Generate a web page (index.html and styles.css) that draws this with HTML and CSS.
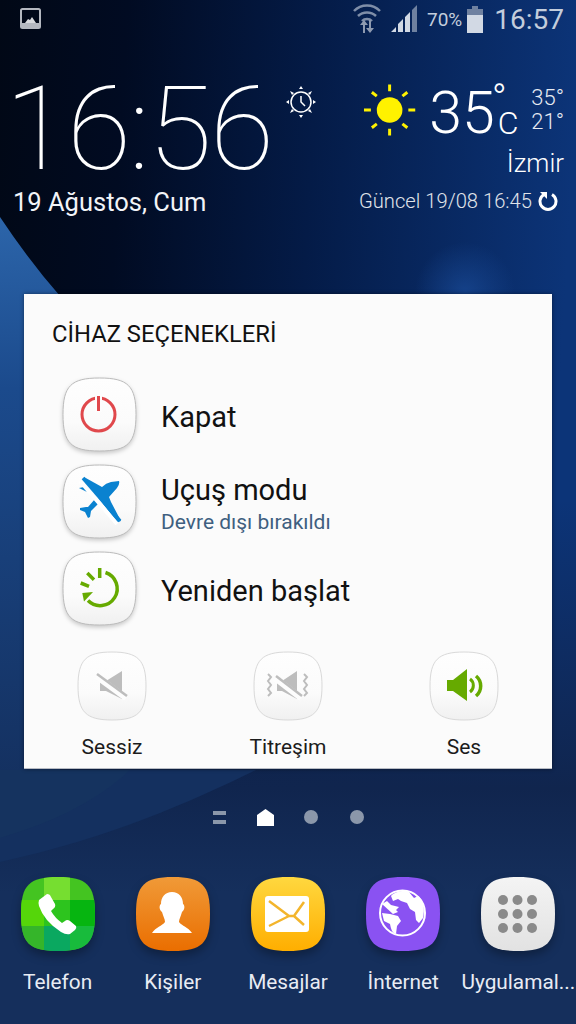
FILE: index.html
```html
<!DOCTYPE html>
<html lang="en">
<head>
    <meta charset="UTF-8">
    <meta name="viewport" content="width=device-width, initial-scale=1.0">
    <title>Home</title>
    <link rel="stylesheet" href="styles.css">
</head>
<body>
<svg class="defs-only" width="0" height="0">
    <defs>
        <linearGradient id="btnFill" x1="0" y1="0" x2="0" y2="1">
            <stop offset="0" stop-color="#fefefe"/>
            <stop offset="0.6" stop-color="#fbfbfb"/>
            <stop offset="1" stop-color="#f0f0f0"/>
        </linearGradient>
        <linearGradient id="orangeFill" x1="0" y1="0" x2="0" y2="1">
            <stop offset="0" stop-color="#f09a38"/>
            <stop offset="1" stop-color="#ea6e00"/>
        </linearGradient>
        <linearGradient id="yellowFill" x1="0" y1="0" x2="0" y2="1">
            <stop offset="0" stop-color="#ffd83f"/>
            <stop offset="1" stop-color="#ffae00"/>
        </linearGradient>
        <linearGradient id="grayFill" x1="0" y1="0" x2="0" y2="1">
            <stop offset="0" stop-color="#f4f4f4"/>
            <stop offset="1" stop-color="#e2e2e2"/>
        </linearGradient>
        <path id="appShape" d="M38 1C67 1 75 9 75 38S67 75 38 75 1 67 1 38 9 1 38 1Z"/>
        <path id="btnShape" d="M37.500 1C66 1 74 9 74 37.500S66 74 37.500 74 1 66 1 37.500 9 1 37.500 1Z" fill="url(#btnFill)" stroke="#bbbbbb" stroke-width="1"/>
        <path id="btnShapeFlat" d="M35 1C61 1 69 9 69 35S61 69 35 69 1 61 1 35 9 1 35 1Z" fill="url(#btnFill)" stroke="#d9d9d9" stroke-width="1"/>
        <clipPath id="appClip"><use href="#appShape"/></clipPath>
    </defs>
</svg>

<svg class="wallpaper" viewBox="0 0 576 1024" preserveAspectRatio="none">
    <defs>
        <linearGradient id="wallBase" x1="0" y1="0" x2="1" y2="0.1">
            <stop offset="0" stop-color="#010816"/>
            <stop offset="0.22" stop-color="#010b22"/>
            <stop offset="0.55" stop-color="#041b47"/>
            <stop offset="1" stop-color="#0c3478"/>
        </linearGradient>
        <linearGradient id="wallEdge" x1="0" y1="217" x2="0" y2="790" gradientUnits="userSpaceOnUse">
            <stop offset="0" stop-color="#2c65aa"/>
            <stop offset="0.3" stop-color="#1b4a8c"/>
            <stop offset="1" stop-color="#14305f"/>
        </linearGradient>
        <linearGradient id="wallLow" x1="0" y1="500" x2="0" y2="1024" gradientUnits="userSpaceOnUse">
            <stop offset="0" stop-color="#10254e" stop-opacity="0"/>
            <stop offset="0.55" stop-color="#10254e"/>
            <stop offset="0.75" stop-color="#152f5c"/>
            <stop offset="1" stop-color="#152f5c"/>
        </linearGradient>
        <radialGradient id="wallGlow" cx="465" cy="292" r="50" gradientUnits="userSpaceOnUse">
            <stop offset="0" stop-color="#1a4b98" stop-opacity="0.7"/>
            <stop offset="1" stop-color="#1a4b98" stop-opacity="0"/>
        </radialGradient>
    </defs>
    <rect width="576" height="1024" fill="url(#wallBase)"/>
    <rect width="576" height="1024" fill="url(#wallGlow)"/>
    <rect y="500" width="576" height="524" fill="url(#wallLow)"/>
    <path d="M0 217Q30 262 60 296V770H0Z" fill="url(#wallEdge)"/>
    <path d="M0 862C110 838 190 802 256 770H0Z" fill="#14305f"/>
    <path d="M0 838C60 820 100 798 130 770H0Z" fill="#15335f"/>
</svg>

<div class="screen">
    <div class="status-bar">
        <svg class="status-pic" width="22" height="22" viewBox="0 0 22 22">
            <rect x="1" y="1" width="19" height="19" rx="1.500" fill="none" stroke="#b4b8c0" stroke-width="2"/>
            <rect x="1" y="15" width="19" height="5" fill="#b4b8c0"/>
            <path d="M5 15l3-4 2 1 2-3 4 6z" fill="#d8dade"/>
        </svg>
        <div class="status-right">
            <svg width="30" height="34" viewBox="0 0 30 34">
                <path d="M2 9a18 18 0 0 1 26 0M6 14a13 13 0 0 1 18 0M10 19a7 7 0 0 1 10 0" fill="none" stroke="#7f8ea8" stroke-width="2.500"/>
                <path d="M11 32v-8h-3l4-5 4 5h-3v8zM17 19h2v8h3l-4 5-4-5h3z" fill="#8e9ab0" transform="translate(0 -1)"/>
            </svg>
            <svg class="status-signal" width="28" height="28" viewBox="0 0 28 28">
                <path d="M1 27l5-5v5zM8 27v-8l5-5v13zM15 27V12l5-5v20z" fill="#d2d9e4"/>
                <path d="M22 27V5l5-5v27z" fill="#6f81a0"/>
            </svg>
            <span class="status-pct">70%</span>
            <svg width="16" height="27" viewBox="0 0 16 27">
                <path d="M5 0h6v3h5v24H0V3h5z" fill="#6f81a0"/>
                <rect y="9" width="16" height="18" fill="#d2d9e4"/>
            </svg>
            <span class="status-time">16:57</span>
        </div>
    </div>

    <div class="widget">
        <div class="clock-block">
            <div class="clock">16:56</div>
            <div class="date">19 Ağustos, Cum</div>
        </div>
        <svg class="alarm" width="32" height="34" viewBox="0 0 32 34">
            <circle cx="16" cy="17" r="10" fill="none" stroke="#fff" stroke-width="1.500"/>
            <path d="M16 11v6l4 4" fill="none" stroke="#fff" stroke-width="1.500"/>
            <path d="M16 1l-2 3h4zM16 33l-2-3h4zM1 17l3-2v4zM31 17l-3-2v4zM5 6l2 4 2-2zM27 6l-4 2 2 2zM5 28l4-2-2-2zM27 28l-2-4-2 2z" fill="#fff"/>
        </svg>
        <div class="weather">
            <div class="weather-main">
                <svg width="54" height="54" viewBox="0 0 54 54">
                    <circle cx="27" cy="27" r="13" fill="#fff200"/>
                    <path d="M27 1v7M27 46v7M1 27h7M46 27h7M9 9l5 4M45 9l-5 4M9 45l5-4M45 45l-5-4" stroke="#fff200" stroke-width="3"/>
                </svg>
                <span class="temp">35</span>
                <div class="temp-unit">
                    <span class="temp-deg">°</span>
                    <span class="temp-c">C</span>
                </div>
                <div class="temp-range">
                    <span>35°</span>
                    <span>21°</span>
                </div>
            </div>
            <div class="city">İzmir</div>
            <div class="updated">
                <span class="updated-text">Güncel 19/08 16:45</span>
                <svg class="updated-icon" width="20" height="20" viewBox="0 0 20 20">
                    <path d="M6 3.500a8 8 0 1 0 8 0" fill="none" stroke="#fff" stroke-width="3"/>
                    <path d="M2 1h7v7z" fill="#fff"/>
                </svg>
            </div>
        </div>
    </div>

    <div class="dialog">
        <h2 class="dialog-title">CİHAZ SEÇENEKLERİ</h2>
        <div class="option-list">
            <div class="option">
                <svg class="big-btn" viewBox="0 0 76 76">
                    <use href="#btnShape"/>
                    <circle cx="36.500" cy="37.500" r="16.500" fill="none" stroke="#e0484c" stroke-width="3"/>
                    <path d="M36.500 17v18" stroke="#fdfdfd" stroke-width="7"/>
                    <path d="M36.500 19v15" stroke="#e0484c" stroke-width="3"/>
                </svg>
                <div class="option-text">
                    <div class="option-name">Kapat</div>
                </div>
            </div>
            <div class="option">
                <svg class="big-btn" viewBox="0 0 76 76">
                    <use href="#btnShape"/>
                    <path d="M22 13L40 23Q44 19 49 18L57 17Q58 20 55 24L47 33L49 38L59 57L55 58L38 36Z" fill="#0a82d0"/>
                    <path d="M33 35L37 39L29 47L28 53L26 54L23 48L18 46L18 44L24 43L26 43ZM17 24L22 23L25 28Z" fill="#0a82d0"/>
                    <path d="M18 17L55 60" stroke="#fff" stroke-width="4"/>
                    <path d="M21 14L58 57" stroke="#0a82d0" stroke-width="3.500"/>
                </svg>
                <div class="option-text">
                    <div class="option-name">Uçuş modu</div>
                    <div class="option-sub">Devre dışı bırakıldı</div>
                </div>
            </div>
            <div class="option">
                <svg class="big-btn" viewBox="0 0 76 76">
                    <use href="#btnShape"/>
                    <path d="M43.500 21.500A17 17 0 1 1 26 49.500" fill="none" stroke="#66aa00" stroke-width="3.500"/>
                    <path d="M37.700 17v10M25.300 22l6.700 6.700M18.700 32l8.300 3.300" stroke="#66aa00" stroke-width="3.500"/>
                    <path d="M20.300 42L31 41L22 50.500z" fill="#66aa00"/>
                </svg>
                <div class="option-text">
                    <div class="option-name">Yeniden başlat</div>
                </div>
            </div>
        </div>
        <div class="sound-row">
            <div class="sound-item">
                <svg class="small-btn" viewBox="0 0 70 70">
                    <use href="#btnShapeFlat"/>
                    <path d="M23 30h6L45 20V48L29 40H23z" fill="#bdbdbd"/>
                    <path d="M19 25L49 47" stroke="#fdfdfd" stroke-width="6"/>
                    <path d="M20 23L50 45" stroke="#bdbdbd" stroke-width="2.500"/>
                </svg>
                <span class="sound-label">Sessiz</span>
            </div>
            <div class="sound-item">
                <svg class="small-btn" viewBox="0 0 70 70">
                    <use href="#btnShapeFlat"/>
                    <path d="M24 30h5L44 20V48L29 40H24z" fill="#bdbdbd"/>
                    <path d="M22 27L48 47" stroke="#fdfdfd" stroke-width="6"/>
                    <path d="M23 25L49 45" stroke="#bdbdbd" stroke-width="2.500"/>
                    <path d="M15 23l3 3-3 4 3 4-3 4 3 4-3 3M51 23l3 3-3 4 3 4-3 4 3 4-3 3" fill="none" stroke="#bdbdbd" stroke-width="2"/>
                </svg>
                <span class="sound-label">Titreşim</span>
            </div>
            <div class="sound-item">
                <svg class="small-btn" viewBox="0 0 70 70">
                    <use href="#btnShapeFlat"/>
                    <path d="M18 29h6L38 18V50L24 40H18z" fill="#66aa00"/>
                    <path d="M41 28a8 8 0 0 1 0 13" fill="none" stroke="#66aa00" stroke-width="3"/>
                    <path d="M47 25a13 13 0 0 1 0 20" fill="none" stroke="#66aa00" stroke-width="3.500"/>
                </svg>
                <span class="sound-label">Ses</span>
            </div>
        </div>
    </div>

    <div class="pager">
        <span class="pager-lines"></span>
        <svg width="17" height="17" viewBox="0 0 17 17"><path d="M8.500 0L17 6V17H0V6z" fill="#fff"/></svg>
        <span class="pager-dot"></span>
        <span class="pager-dot"></span>
    </div>

    <div class="dock">
        <div class="dock-item">
            <svg class="app-icon" viewBox="0 0 76 76">
                <g clip-path="url(#appClip)">
                    <rect width="76" height="76" fill="#44c421"/>
                    <rect x="24" width="26" height="24" fill="#76de30"/>
                    <rect y="24" width="24" height="26" fill="#55d60a"/>
                    <rect x="50" y="24" width="26" height="26" fill="#06b510"/>
                    <rect x="24" y="24" width="26" height="26" fill="#2dc41e"/>
                    <rect x="24" y="50" width="26" height="26" fill="#0aa860"/>
                    <rect x="50" y="50" width="26" height="26" fill="#18bb3c"/>
                    <rect y="50" width="24" height="26" fill="#35b52a"/>
                </g>
                <path d="M19 24L27 18Q30 18 31 21L35 28Q36 31 33 33L31 35Q35 42 42 47L45 45Q47 43 50 45L56 50Q57 52 55 54L50 58Q46 59 41 56Q24 45 19 30Q18 27 19 24Z" fill="#fff"/>
            </svg>
            <span class="app-label">Telefon</span>
        </div>
        <div class="dock-item">
            <svg class="app-icon" viewBox="0 0 76 76">
                <use href="#appShape" fill="url(#orangeFill)"/>
                <path d="M37 16C44 16 48 21 48 28C50 29 50 34 47 36C46 40 44 43 44 46C47 50 53 51 57 57H17C21 51 27 50 30 46C30 43 28 40 27 36C24 34 24 29 26 28C26 21 30 16 37 16Z" fill="#fff"/>
            </svg>
            <span class="app-label">Kişiler</span>
        </div>
        <div class="dock-item">
            <svg class="app-icon" viewBox="0 0 76 76">
                <use href="#appShape" fill="url(#yellowFill)"/>
                <rect x="15" y="20" width="44" height="36" rx="3" fill="#fff"/>
                <path d="M19 25L39 40H44L54 26M19 50L39 40M44 40L54 49" fill="none" stroke="#f3b52c" stroke-width="2.500"/>
            </svg>
            <span class="app-label">Mesajlar</span>
        </div>
        <div class="dock-item">
            <svg class="app-icon" viewBox="0 0 76 76">
                <use href="#appShape" fill="#8a52f2"/>
                <circle cx="37.500" cy="37" r="22.500" fill="#8a52f2" stroke="#fff" stroke-width="2"/>
                <path d="M26 20c4-5 14-6 18-4l5 6 4-2c6 5 7 13 5 22l-4 5-3-3-1-8-5-3-3-6-6-2-3-2-5 2zM17 28l5-3 4 4 8 2-3 3 2 2-5 2zM17 37l8 1 8 2 3 5-4 5-1 8c-4-1-5-5-6-10l-6-3z" fill="#fff"/>
            </svg>
            <span class="app-label">İnternet</span>
        </div>
        <div class="dock-item">
            <svg class="app-icon" viewBox="0 0 76 76">
                <use href="#appShape" fill="url(#grayFill)"/>
                <g fill="#8a8a8a">
                    <circle cx="23" cy="24" r="5"/><circle cx="37.500" cy="24" r="5"/><circle cx="52" cy="24" r="5"/>
                    <circle cx="23" cy="38" r="5"/><circle cx="37.500" cy="38" r="5"/><circle cx="52" cy="38" r="5"/>
                    <circle cx="23" cy="52" r="5"/><circle cx="37.500" cy="52" r="5"/><circle cx="52" cy="52" r="5"/>
                </g>
            </svg>
            <span class="app-label">Uygulamal...</span>
        </div>
    </div>
</div>
</body>
</html>
```
FILE: styles.css
```css
html, body {
    margin: 0;
    padding: 0;
}

body {
    position: relative;
    width: 576px;
    height: 1024px;
    overflow: hidden;
    font-family: Roboto, "Liberation Sans", sans-serif;
    color: #fff;
    background-color: #0a2450;
}

.wallpaper {
    position: absolute;
    top: 0;
    left: 0;
    width: 576px;
    height: 1024px;
}

.defs-only {
    position: absolute;
}

.screen {
    position: relative;
    display: flex;
    flex-direction: column;
    height: 1024px;
}

/* status bar */
.status-bar {
    display: flex;
    justify-content: space-between;
    align-items: center;
    height: 38px;
    padding: 0 12px 0 20px;
}

.status-right {
    display: flex;
    align-items: center;
    gap: 8px;
}

.status-pct {
    font-size: 19px;
    color: #c3cddc;
    margin-left: 1px;
    margin-right: -3px;
}

.status-time {
    font-size: 28px;
    color: #c3cddc;
    margin-left: 3px;
}

/* clock and weather */
.widget {
    display: flex;
    align-items: flex-start;
    height: 256px;
    padding-left: 10px;
}

.clock-block {
    flex: 0 0 272px;
}

.clock {
    font-size: 117px;
    font-weight: 100;
    line-height: 100px;
    letter-spacing: -2px;
    margin: 41px 0 0 -5px;
    white-space: nowrap;
}

.date {
    font-size: 25.500px;
    line-height: 30px;
    margin: 8px 0 0 3px;
    color: #f2f4f8;
}

.alarm {
    flex-shrink: 0;
    margin: 47px 0 0 3px;
}

.weather {
    flex: 1;
    min-width: 0;
    margin-left: 46px;
    padding-right: 12px;
}

.weather-main {
    display: flex;
    align-items: flex-start;
    margin-top: 45px;
}

.temp {
    font-size: 59px;
    font-weight: 300;
    line-height: 60px;
    margin-left: 13px;
}

.temp-unit {
    display: flex;
    flex-direction: column;
    width: 28px;
    margin-left: 3px;
}

.temp-deg {
    font-size: 40px;
    font-weight: 300;
    line-height: 26px;
    margin: 4px 0 0 -6px;
}

.temp-c {
    font-size: 32px;
    font-weight: 300;
    line-height: 30px;
    margin-top: -5px;
}

.temp-range {
    display: flex;
    flex-direction: column;
    font-size: 22px;
    font-weight: 300;
    line-height: 24px;
    margin-left: 6px;
    margin-top: 3px;
    color: #e6eaf2;
}

.city {
    text-align: right;
    font-size: 26px;
    font-weight: 300;
    line-height: 30px;
    margin-top: 5px;
}

.updated {
    display: flex;
    justify-content: flex-end;
    align-items: center;
    gap: 6px;
    font-size: 20.200px;
    font-weight: 300;
    line-height: 24px;
    margin-top: 11px;
    margin-right: 6px;
    color: #e0e4ea;
}

.updated-text {
    flex-shrink: 0;
    white-space: nowrap;
}

.updated-icon {
    flex-shrink: 0;
}

/* device options dialog */
.dialog {
    margin: 0 24px;
    height: 475px;
    box-sizing: border-box;
    padding: 25px 28px 0;
    background-color: #fbfbfb;
    color: #111;
    border-bottom: 1px solid #b8bcc4;
    box-shadow: 0 0 4px rgba(0, 0, 0, 0.45);
}

.dialog-title {
    margin: 0;
    font-size: 23.800px;
    font-weight: 400;
    line-height: 30px;
}

.option-list {
    display: flex;
    flex-direction: column;
    gap: 11px;
    margin: 28px 0 0 10px;
}

.option {
    display: flex;
    align-items: center;
    gap: 23px;
}

.big-btn {
    width: 76px;
    height: 76px;
    flex-shrink: 0;
    filter: drop-shadow(0 2px 2px rgba(0, 0, 0, 0.2));
}

.option-text {
    margin-top: 4px;
}

.option-name {
    font-size: 29px;
    line-height: 34px;
}

.option-sub {
    font-size: 21px;
    line-height: 24px;
    margin: 3px 0 1px;
    color: #3f5f80;
}

.sound-row {
    display: grid;
    grid-template-columns: repeat(3, 176px);
    margin: 24px 0 0 -28px;
}

.sound-item {
    display: flex;
    flex-direction: column;
    align-items: center;
    gap: 13px;
}

.small-btn {
    width: 70px;
    height: 70px;
}

.sound-label {
    font-size: 21px;
    line-height: 26px;
    color: #1c1c1c;
}

/* home pages */
.pager {
    display: grid;
    grid-template-columns: repeat(4, 46px);
    justify-content: center;
    justify-items: center;
    align-items: center;
    height: 18px;
    margin-top: 39px;
}

.pager-lines {
    width: 13px;
    height: 13px;
    border-top: 4px solid #8b97aa;
    border-bottom: 4px solid #8b97aa;
    box-sizing: border-box;
}

.pager-dot {
    width: 14px;
    height: 14px;
    border-radius: 50%;
    background-color: #8b97aa;
}

/* dock */
.dock {
    display: grid;
    grid-template-columns: repeat(5, 115.200px);
    margin-top: 50px;
}

.dock-item {
    display: flex;
    flex-direction: column;
    align-items: center;
    min-width: 0;
}

.app-icon {
    width: 76px;
    height: 76px;
    filter: drop-shadow(0 5px 5px rgba(0, 0, 0, 0.3));
}

.app-label {
    margin-top: 17px;
    font-size: 20.800px;
    line-height: 26px;
    text-align: center;
    color: #e8ecf4;
    white-space: nowrap;
}
```
